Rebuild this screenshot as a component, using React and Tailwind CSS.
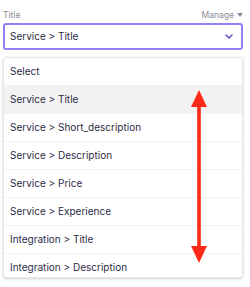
import React from 'react';

const options = [
  'Select',
  'Service > Title',
  'Service > Short_description',
  'Service > Description',
  'Service > Price',
  'Service > Experience',
  'Integration > Title',
  'Integration > Description',
];

function App() {
  return (
    <div className="relative w-[250px] h-[287px] overflow-hidden bg-white font-['Inter',sans-serif]">
      <div className="ml-[3px] w-[240px] pt-[9px]">
        {/* Label row */}
        <div className="flex h-[12px] items-center justify-between text-[8.5px] text-[#8b8b95]">
          <span>Title</span>
          <span className="flex items-center gap-[3px]">
            Manage
            <svg width="6" height="4" viewBox="0 0 6 4">
              <path d="M0 0 L6 0 L3 4 Z" fill="#8b8b95" />
            </svg>
          </span>
        </div>

        {/* Select box */}
        <div className="mt-[2px] flex h-[27px] items-center justify-between rounded-[3px] border-2 border-[#8d82f7] pl-[5px] pr-[8px] text-[10px] text-[#2e2b47]">
          <span>Service &gt; Title</span>
          <svg width="8" height="5" viewBox="0 0 8 5" fill="none">
            <path d="M1 1 L4 4 L7 1" stroke="#5b4fd0" strokeWidth="1.5" strokeLinecap="round" strokeLinejoin="round" />
          </svg>
        </div>

        {/* Dropdown */}
        <div className="mt-[7px] h-[221px] overflow-hidden rounded-[3px] border border-[#e6e6e9] bg-white shadow-[0_1px_3px_rgba(0,0,0,0.18)]">
          {options.map((opt, i) => (
            <div
              key={opt}
              className={`flex h-[28px] shrink-0 items-center border-b border-[#f1f1f3] pl-[6px] text-[10px] text-[#2e2b47] ${i === 1 ? 'bg-[#f2f2f3]' : ''}`}
            >
              {opt}
            </div>
          ))}
        </div>
      </div>

      {/* Red double arrow annotation */}
      <svg className="absolute left-[190px] top-[89px]" width="18" height="176" viewBox="0 0 18 176">
        <rect x="7.2" y="16" width="3.6" height="144" fill="#fe2a17" />
        <path d="M9 1 L17 18 L1 18 Z" fill="#fe2a17" />
        <path d="M9 174 L17 157 L1 157 Z" fill="#fe2a17" />
      </svg>
    </div>
  );
}

export default App;
